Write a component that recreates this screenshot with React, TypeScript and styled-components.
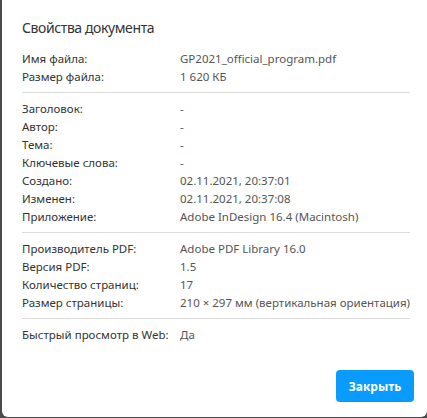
import React from "react";
import styled, { createGlobalStyle } from "styled-components";

const Global = createGlobalStyle`
  html, body { margin: 0; padding: 0; background: #4b4b4b; }
  body { width: 427px; height: 418px; overflow: hidden; font-family: "Noto Sans", "Open Sans", sans-serif; }
`;

const Dialog = styled.div`
  margin-left: 2px;
  width: 425px;
  height: 417px;
  background: #ffffff;
  border-radius: 0 0 6px 6px;
  box-sizing: border-box;
  padding: 16px 0 0 20px;
  display: flex;
  flex-direction: column;
`;

const Title = styled.h1`
  margin: 0;
  font-size: 14px;
  font-weight: 400;
  letter-spacing: -0.4px;
  line-height: 24px;
  color: #333333;
`;

const Body = styled.div`
  width: 388px;
  margin-top: 10px;
  display: flex;
  flex-direction: column;
`;

const Group = styled.div`
  display: flex;
  flex-direction: column;
`;

const Separator = styled.hr`
  border: none;
  height: 1px;
  background: #dcdcdc;
  margin: 6px 0 7px 0;
  width: 388px;
`;

const Row = styled.div`
  display: grid;
  grid-template-columns: 158px 1fr;
  height: 18px;
  line-height: 18px;
  font-size: 11.5px;
  white-space: nowrap;
`;

const Label = styled.span`
  color: #333333;
`;

const Value = styled.span`
  color: #555555;
`;

const Footer = styled.div`
  display: flex;
  justify-content: flex-end;
  width: 392px;
  margin-top: 26px;
`;

const Button = styled.button`
  width: 78px;
  height: 32px;
  border: none;
  border-radius: 4px;
  background: #0a9bff;
  color: #ffffff;
  font-family: "Noto Sans", "Open Sans", sans-serif;
  font-weight: 700;
  font-size: 12px;
`;

const groups: [string, string][][] = [
  [
    ["Имя файла:", "GP2021_official_program.pdf"],
    ["Размер файла:", "1 620 КБ"],
  ],
  [
    ["Заголовок:", "-"],
    ["Автор:", "-"],
    ["Тема:", "-"],
    ["Ключевые слова:", "-"],
    ["Создано:", "02.11.2021, 20:37:01"],
    ["Изменен:", "02.11.2021, 20:37:08"],
    ["Приложение:", "Adobe InDesign 16.4 (Macintosh)"],
  ],
  [
    ["Производитель PDF:", "Adobe PDF Library 16.0"],
    ["Версия PDF:", "1.5"],
    ["Количество страниц:", "17"],
    ["Размер страницы:", "210 × 297 мм (вертикальная ориентация)"],
  ],
  [["Быстрый просмотр в Web:", "Да"]],
];

export default function App() {
  return (
    <>
      <Global />
      <Dialog>
        <Title>Свойства документа</Title>
        <Body>
          {groups.map((g, i) => (
            <React.Fragment key={i}>
              {i > 0 && <Separator />}
              <Group>
                {g.map(([l, v]) => (
                  <Row key={l}>
                    <Label>{l}</Label>
                    <Value>{v}</Value>
                  </Row>
                ))}
              </Group>
            </React.Fragment>
          ))}
        </Body>
        <Footer>
          <Button>Закрыть</Button>
        </Footer>
      </Dialog>
    </>
  );
}
